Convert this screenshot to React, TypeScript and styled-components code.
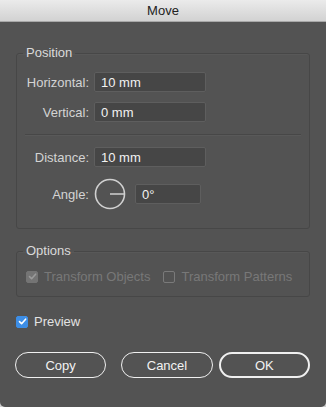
import React from 'react';
import styled, { createGlobalStyle } from 'styled-components';

const GlobalStyle = createGlobalStyle`
  html, body {
    margin: 0;
    padding: 0;
    background: #cfcfcf;
  }
  * {
    box-sizing: border-box;
  }
`;

const Window = styled.div`
  width: 326px;
  height: 407px;
  background: #535353;
  border-radius: 0 0 5px 5px;
  overflow: hidden;
  font-family: "Liberation Sans", Arial, sans-serif;
  font-size: 13px;
  color: #d8d8d8;
  display: flex;
  flex-direction: column;
`;

const TitleBar = styled.div`
  height: 22px;
  flex-shrink: 0;
  background: linear-gradient(#ebebeb, #d2d2d2);
  border-bottom: 1px solid #a8a8a8;
  display: flex;
  align-items: center;
  justify-content: center;
  color: #222;
  font-size: 13px;
`;

const Body = styled.div`
  padding: 23px 16px 0 16px;
  display: flex;
  flex-direction: column;
`;

const Group = styled.fieldset<{ $gapTop?: number }>`
  margin: ${p => p.$gapTop ?? 0}px 0 0 0;
  padding: 0;
  border: 1px solid #474747;
  border-radius: 3px;
  box-shadow: inset 0 1px 0 rgba(255, 255, 255, 0.03);
  min-width: 0;
`;

const Legend = styled.legend`
  margin-left: 6px;
  padding: 0 3px;
  font-size: 13px;
  line-height: 16px;
  color: #dadada;
`;

const GroupInner = styled.div<{ $top: number; $bottom: number }>`
  padding: ${p => p.$top}px 0 ${p => p.$bottom}px 0;
  display: flex;
  flex-direction: column;
`;

const FieldRow = styled.div<{ $mt?: number }>`
  display: flex;
  align-items: center;
  margin-top: ${p => p.$mt ?? 0}px;
`;

const Label = styled.span`
  width: 72px;
  text-align: right;
  color: #d4d4d4;
  margin-right: 5px;
`;

const TextBox = styled.div<{ $w: number }>`
  width: ${p => p.$w}px;
  height: 20px;
  background: #464646;
  border: 1px solid #5e5e5e;
  border-radius: 2px;
  padding: 0 6px;
  display: flex;
  align-items: center;
  color: #f2f2f2;
  font-size: 13px;
`;

const Divider = styled.div`
  height: 2px;
  margin: 12px 8px 0 8px;
  border-top: 1px solid #474747;
  border-bottom: 1px solid #595959;
`;

const Dial = styled.svg`
  width: 32px;
  height: 32px;
  margin-right: 9px;
  flex-shrink: 0;
`;

const CheckRow = styled.div`
  display: flex;
  align-items: center;
  padding-left: 9px;
`;

const CheckItem = styled.label<{ $disabled?: boolean; $ml?: number }>`
  display: flex;
  align-items: center;
  margin-left: ${p => p.$ml ?? 0}px;
  color: ${p => (p.$disabled ? '#787878' : '#e2e2e2')};
  font-size: 13px;
`;

const Box = styled.span<{ $checked?: boolean; $disabled?: boolean }>`
  width: 12px;
  height: 12px;
  margin-right: 6px;
  border-radius: 2px;
  display: flex;
  align-items: center;
  justify-content: center;
  background: ${p => (p.$checked ? (p.$disabled ? '#747474' : '#3d8ee6') : 'transparent')};
  border: 1px solid ${p => (p.$checked ? (p.$disabled ? '#747474' : '#3d8ee6') : '#7a7a7a')};
`;

const PreviewRow = styled.div`
  margin-top: 17px;
  display: flex;
`;

const Buttons = styled.div`
  display: flex;
  align-items: center;
  margin: 23px 0 0 -1px;
`;

const Button = styled.button<{ $primary?: boolean; $ml: number }>`
  width: 92px;
  height: 26px;
  margin-left: ${p => p.$ml}px;
  border-radius: 13px;
  background: transparent;
  border: ${p => (p.$primary ? '2px' : '1px')} solid #f0f0f0;
  color: #f2f2f2;
  font-family: "Liberation Sans", Arial, sans-serif;
  font-size: 13px;
  padding: 0;
`;

const Check = ({ color }: { color: string }) => (
  <svg width="9" height="9" viewBox="0 0 9 9">
    <path d="M1.5 4.6 L3.6 6.7 L7.6 2.2" fill="none" stroke={color} strokeWidth="1.6" strokeLinecap="round" strokeLinejoin="round" />
  </svg>
);

export default function App() {
  return (
    <Window>
      <GlobalStyle />
      <TitleBar>Move</TitleBar>
      <Body>
        <Group>
          <Legend>Position</Legend>
          <GroupInner $top={11} $bottom={18}>
            <FieldRow>
              <Label>Horizontal:</Label>
              <TextBox $w={112}>10 mm</TextBox>
            </FieldRow>
            <FieldRow $mt={10}>
              <Label>Vertical:</Label>
              <TextBox $w={112}>0 mm</TextBox>
            </FieldRow>
            <Divider />
            <FieldRow $mt={11}>
              <Label>Distance:</Label>
              <TextBox $w={112}>10 mm</TextBox>
            </FieldRow>
            <FieldRow $mt={11}>
              <Label>Angle:</Label>
              <Dial viewBox="0 0 32 32">
                <circle cx="16" cy="16" r="14.5" fill="none" stroke="#d0d0d0" strokeWidth="1.6" />
                <line x1="16" y1="16" x2="30.5" y2="16" stroke="#d0d0d0" strokeWidth="1.6" />
              </Dial>
              <TextBox $w={66}>0°</TextBox>
            </FieldRow>
          </GroupInner>
        </Group>

        <Group $gapTop={14}>
          <Legend>Options</Legend>
          <GroupInner $top={10} $bottom={12}>
            <CheckRow>
              <CheckItem $disabled>
                <Box $checked $disabled>
                  <Check color="#9a9a9a" />
                </Box>
                Transform Objects
              </CheckItem>
              <CheckItem $disabled $ml={13}>
                <Box />
                Transform Patterns
              </CheckItem>
            </CheckRow>
          </GroupInner>
        </Group>

        <PreviewRow>
          <CheckItem>
            <Box $checked>
              <Check color="#ffffff" />
            </Box>
            Preview
          </CheckItem>
        </PreviewRow>

        <Buttons>
          <Button $ml={0}>Copy</Button>
          <Button $ml={15}>Cancel</Button>
          <Button $ml={6} $primary>OK</Button>
        </Buttons>
      </Body>
    </Window>
  );
}
